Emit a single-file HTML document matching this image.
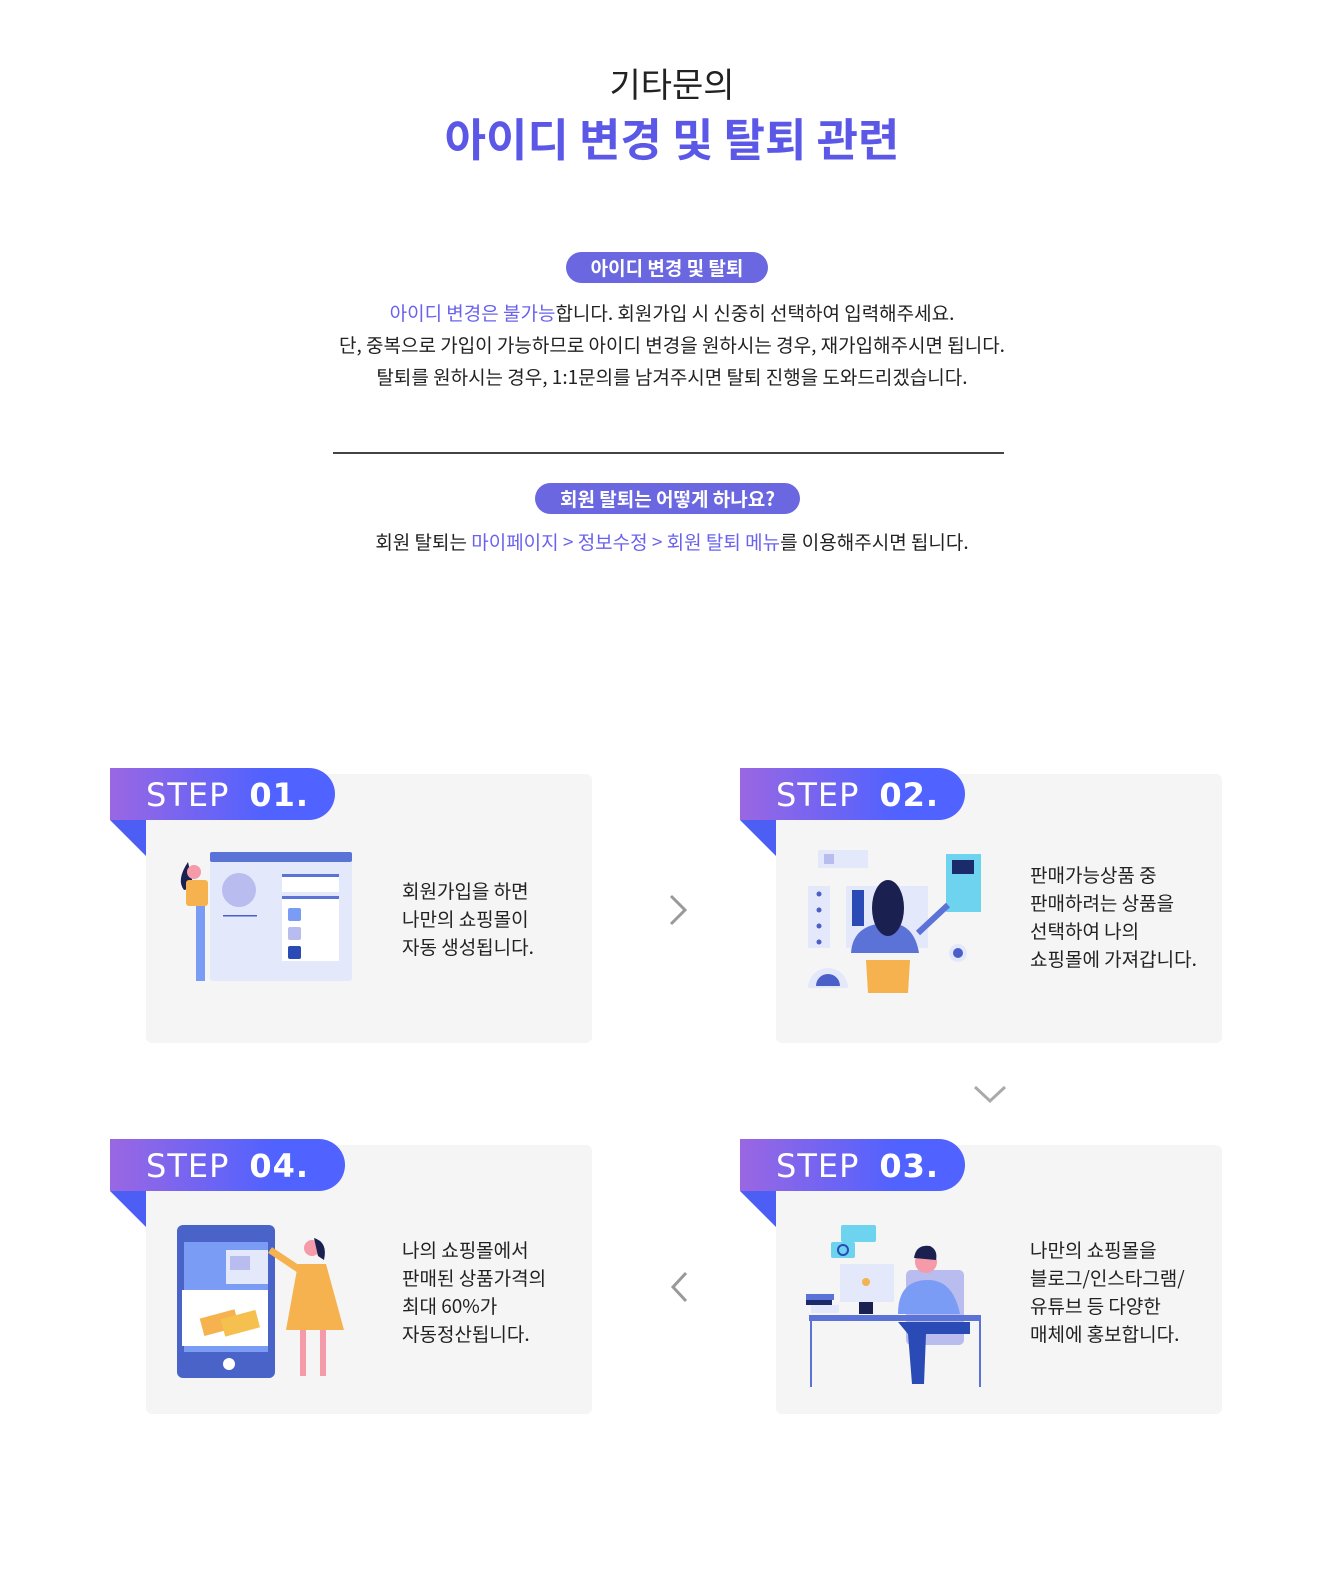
<!DOCTYPE html>
<html><head><meta charset="utf-8"><style>
*{margin:0;padding:0;box-sizing:border-box}
body{width:1344px;height:1580px;background:#fff;font-family:"Noto Sans CJK KR","Liberation Sans",sans-serif;color:#222;position:relative;overflow:hidden}
.a{position:absolute}
.c{text-align:center;left:0;width:1344px}
.pill{position:absolute;background:#6b67e0;color:#fff;font-weight:700;font-size:19px;border-radius:16px;height:31px;line-height:31px;text-align:center}
.p{font-size:19px;line-height:32px}
.b{color:#6a62ee}
.card{position:absolute;background:#f5f5f5;border-radius:6px;width:446px;height:269px}
.tab{position:absolute;height:52px;border-radius:0 26px 26px 0;background:linear-gradient(90deg,#9a67e2,#5062ff 70%);color:#fff;font-size:32px;line-height:54px;padding-left:36px;letter-spacing:1px;font-family:"DejaVu Sans","Liberation Sans",sans-serif}
.tab b{margin-left:20px;font-weight:700}
.tri{position:absolute;width:0;height:0;border-top:36px solid #4d5ef5;border-left:36px solid transparent}
.tx{position:absolute;font-size:19px;line-height:28px;color:#222}
</style></head><body>
<div class="a c" style="top:58px;font-size:34px;color:#222">기타문의</div>
<div class="a c" style="top:104px;font-size:45px;font-weight:700;color:#5b58e8">아이디 변경 및 탈퇴 관련</div>

<div class="pill" style="left:566px;top:252px;width:202px">아이디 변경 및 탈퇴</div>
<div class="a c p" style="top:297px"><span class="b">아이디 변경은 불가능</span>합니다. 회원가입 시 신중히 선택하여 입력해주세요.<br>단, 중복으로 가입이 가능하므로 아이디 변경을 원하시는 경우, 재가입해주시면 됩니다.<br>탈퇴를 원하시는 경우, 1:1문의를 남겨주시면 탈퇴 진행을 도와드리겠습니다.</div>
<div class="a" style="left:333px;top:452px;width:671px;height:2px;background:#444"></div>
<div class="pill" style="left:535px;top:483px;width:265px">회원 탈퇴는 어떻게 하나요?</div>
<div class="a c p" style="top:526px">회원 탈퇴는 <span class="b">마이페이지 &gt; 정보수정 &gt; 회원 탈퇴 메뉴</span>를 이용해주시면 됩니다.</div>

<div class="card" style="left:146px;top:774px"></div>
<div class="card" style="left:776px;top:774px"></div>
<div class="card" style="left:146px;top:1145px"></div>
<div class="card" style="left:776px;top:1145px"></div>

<div class="tab" style="left:110px;top:768px;width:225px">STEP<b>01.</b></div><div class="tri" style="left:110px;top:820px"></div>
<div class="tab" style="left:740px;top:768px;width:225px">STEP<b>02.</b></div><div class="tri" style="left:740px;top:820px"></div>
<div class="tab" style="left:110px;top:1139px;width:235px">STEP<b>04.</b></div><div class="tri" style="left:110px;top:1191px"></div>
<div class="tab" style="left:740px;top:1139px;width:225px">STEP<b>03.</b></div><div class="tri" style="left:740px;top:1191px"></div>

<div class="tx" style="left:402px;top:877px">회원가입을 하면<br>나만의 쇼핑몰이<br>자동 생성됩니다.</div>
<div class="tx" style="left:1030px;top:861px">판매가능상품 중<br>판매하려는 상품을<br>선택하여 나의<br>쇼핑몰에 가져갑니다.</div>
<div class="tx" style="left:402px;top:1236px">나의 쇼핑몰에서<br>판매된 상품가격의<br>최대 60%가<br>자동정산됩니다.</div>
<div class="tx" style="left:1030px;top:1236px">나만의 쇼핑몰을<br>블로그/인스타그램/<br>유튜브 등 다양한<br>매체에 홍보합니다.</div>

<svg class="a" style="left:668px;top:893px" width="22" height="34"><path d="M3 3 L17 17 L3 31" fill="none" stroke="#999" stroke-width="3"/></svg>
<svg class="a" style="left:972px;top:1084px" width="36" height="22"><path d="M3 3 L18 17 L33 3" fill="none" stroke="#aaa" stroke-width="3"/></svg>
<svg class="a" style="left:668px;top:1270px" width="22" height="34"><path d="M18 3 L5 17 L18 31" fill="none" stroke="#999" stroke-width="3"/></svg>

<svg class="a" style="left:176px;top:850px" width="180" height="135">
<rect x="34" y="2" width="142" height="129" rx="3" fill="#e4e8fb"/>
<rect x="34" y="2" width="142" height="10" rx="2" fill="#5b73d6"/>
<circle cx="63" cy="40" r="17" fill="#b8bcef"/>
<rect x="47" y="65" width="34" height="1.5" fill="#4a5fc8"/>
<rect x="106" y="24" width="57" height="18" fill="#fff"/><rect x="106" y="24" width="57" height="3" fill="#5b73d6"/>
<rect x="106" y="46" width="57" height="65" fill="#fff"/><rect x="106" y="46" width="57" height="3" fill="#5b73d6"/>
<rect x="112" y="58" width="13" height="13" rx="2" fill="#7a9cf5"/><rect x="112" y="77" width="13" height="13" rx="2" fill="#b8bcef"/><rect x="112" y="96" width="13" height="13" rx="2" fill="#2a4ab5"/>
<path d="M12 12 q-12 18 -4 28 l10 -2 z" fill="#1a2050"/>
<circle cx="18" cy="22" r="7" fill="#f49aa8"/>
<rect x="10" y="30" width="22" height="26" rx="3" fill="#f5b24e"/>
<rect x="20" y="56" width="9" height="75" fill="#7a9cf5"/>
</svg>

<svg class="a" style="left:806px;top:848px" width="180" height="148">
<rect x="12" y="2" width="50" height="18" fill="#e4e8fb"/><rect x="18" y="6" width="10" height="10" fill="#b8bcef"/>
<rect x="2" y="38" width="22" height="62" fill="#e4e8fb"/>
<circle cx="13" cy="46" r="2.5" fill="#4a5fc8"/><circle cx="13" cy="62" r="2.5" fill="#4a5fc8"/><circle cx="13" cy="78" r="2.5" fill="#4a5fc8"/><circle cx="13" cy="94" r="2.5" fill="#4a5fc8"/>
<rect x="40" y="38" width="82" height="62" fill="#e4e8fb"/><rect x="46" y="42" width="12" height="36" fill="#2a4ab5"/>
<rect x="140" y="6" width="35" height="58" fill="#6dd3ee"/><rect x="146" y="12" width="22" height="14" fill="#1a2a6a"/>
<path d="M45 105 q2 -30 38 -30 q25 0 30 30 z" fill="#5b73d6"/>
<ellipse cx="82" cy="60" rx="16" ry="28" fill="#1a2050"/>
<path d="M60 112 h44 l-2 33 h-40 z" fill="#f5b24e"/>
<path d="M112 85 l30 -28" stroke="#5b73d6" stroke-width="6"/>
<path d="M2 140 a20 20 0 0 1 40 0 z" fill="#e4e8fb"/><path d="M10 138 a12 12 0 0 1 24 0 z" fill="#4a5fc8"/>
<circle cx="152" cy="105" r="9" fill="#e4e8fb"/><circle cx="152" cy="105" r="5" fill="#4a5fc8"/>
</svg>

<svg class="a" style="left:176px;top:1224px" width="180" height="158">
<rect x="1" y="1" width="98" height="153" rx="6" fill="#4a63c8"/>
<rect x="8" y="18" width="84" height="110" fill="#7a9cf5"/>
<rect x="50" y="26" width="42" height="34" fill="#e4e8fb"/><rect x="54" y="32" width="20" height="14" fill="#b8bcef"/>
<rect x="6" y="66" width="86" height="56" fill="#fff"/>
<circle cx="53" cy="140" r="6" fill="#fff"/>
<g transform="rotate(-15 50 100)"><rect x="26" y="88" width="36" height="18" fill="#f5b24e"/><rect x="46" y="94" width="36" height="18" fill="#f5c04e"/></g>
<circle cx="136" cy="24" r="8" fill="#f49aa8"/><path d="M138 14 q14 4 10 22 l-6 -4 z" fill="#1a2050"/>
<path d="M122 40 h28 l18 66 h-58 z" fill="#f5b24e"/>
<rect x="124" y="106" width="6" height="46" fill="#f49aa8"/><rect x="144" y="106" width="6" height="46" fill="#f49aa8"/>
<path d="M124 46 l-30 -20" stroke="#f5b24e" stroke-width="7"/>
</svg>

<svg class="a" style="left:806px;top:1222px" width="180" height="166">
<rect x="35" y="3" width="35" height="17" rx="2" fill="#6dd3ee"/>
<rect x="25" y="20" width="24" height="16" rx="2" fill="#6dd3ee"/><circle cx="37" cy="28" r="5" fill="none" stroke="#2a4ab5" stroke-width="2"/>
<rect x="34" y="42" width="54" height="38" fill="#e4e8fb"/><circle cx="60" cy="60" r="4" fill="#f5b24e"/>
<rect x="53" y="80" width="14" height="12" fill="#1a2050"/>
<rect x="0" y="72" width="28" height="6" fill="#5b73d6"/><rect x="0" y="78" width="26" height="5" fill="#1a2a6a"/><rect x="5" y="83" width="28" height="8" fill="#e4e8fb"/>
<rect x="100" y="48" width="58" height="75" rx="5" fill="#b8bcef"/>
<path d="M92 92 q0 -34 30 -34 q25 0 32 34 z" fill="#7a9cf5"/>
<circle cx="120" cy="40" r="11" fill="#f49aa8"/><path d="M108 36 q2 -14 16 -12 q8 4 6 14 z" fill="#1a2050"/>
<rect x="3" y="93" width="172" height="6" fill="#5b73d6"/>
<rect x="4" y="99" width="2" height="66" fill="#5b73d6"/><rect x="173" y="99" width="2" height="66" fill="#5b73d6"/>
<path d="M92 100 h72 v12 h-44 l-2 50 h-12 l-4 -50 z" fill="#2a4ab5"/>
</svg>
</body></html>
